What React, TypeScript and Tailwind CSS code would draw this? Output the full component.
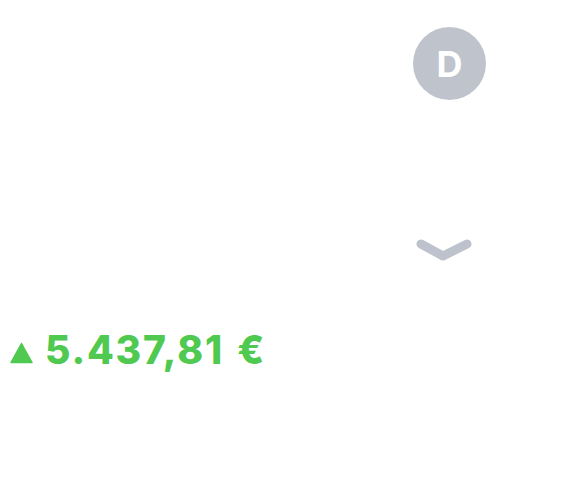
export default function App() {
  return (
    <div className="w-[588px] h-[498px] bg-white flex flex-col" style={{ fontFamily: '"Liberation Sans", Arial, sans-serif' }}>
      <div className="flex justify-end pr-[102px] pt-[27px]">
        <div className="w-[73px] h-[73px] rounded-full bg-[#bfc3cc] flex items-center justify-center">
          <span className="text-white font-bold text-[36px] leading-none" style={{ fontFamily: 'Inter, sans-serif' }}>D</span>
        </div>
      </div>
      <div className="pl-[414px] pt-[139px]">
        <svg width="60" height="26" viewBox="0 0 60 26">
          <path d="M7 5 L29 17 L53 5" fill="none" stroke="#bdc2cc" strokeWidth="9" strokeLinecap="round" strokeLinejoin="round" />
        </svg>
      </div>
      <div className="flex items-start pl-[10px] pt-[65px] text-[#4fc94f]">
        <svg width="23" height="22" viewBox="0 0 23 22" className="mt-[12px]">
          <path d="M11.5 1.5 L22 20.5 L1 20.5 Z" fill="#4fc94f" stroke="#4fc94f" strokeWidth="1.5" strokeLinejoin="round" />
        </svg>
        <span className="ml-[12px] font-extrabold text-[39px] leading-none tracking-[1.8px] [word-spacing:3px]" style={{ fontFamily: 'Inter, sans-serif' }}>5.437,81 €</span>
      </div>
    </div>
  );
}
